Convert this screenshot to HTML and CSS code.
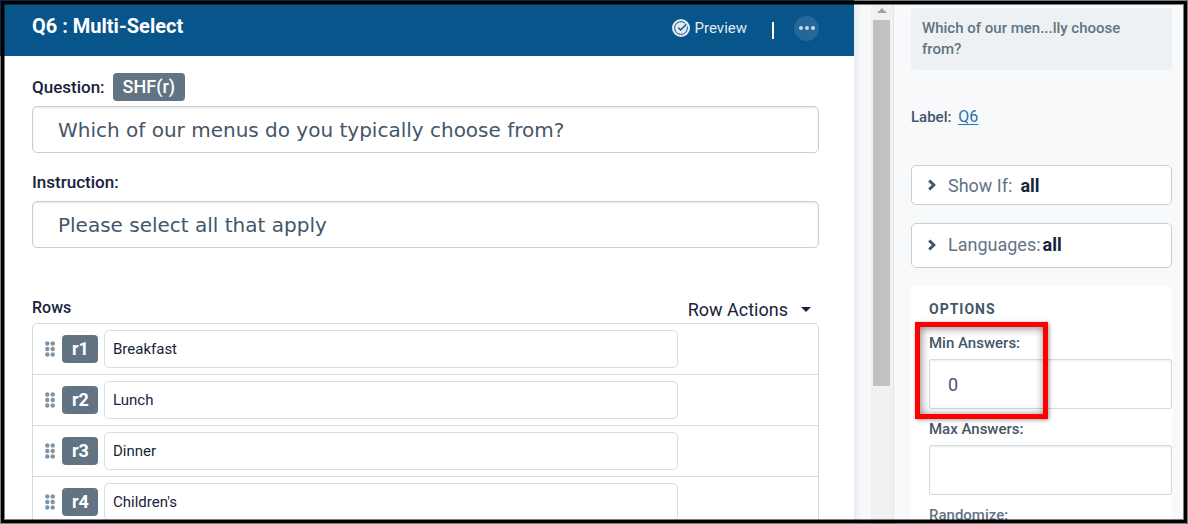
FILE: index.html
```html
<!DOCTYPE html>
<html lang="en">
<head>
<meta charset="utf-8">
<title>Q6 : Multi-Select</title>
<link rel="stylesheet" href="styles.css">
</head>
<body>
<div class="app">
  <main class="editor">
    <header class="topbar">
      <h1 class="topbar-title">Q6 : Multi-Select</h1>
      <button class="preview" type="button">
        <svg class="preview-icon" viewBox="0 0 18 18" aria-hidden="true">
          <circle cx="9" cy="9" r="9" fill="#e3e9f0"/>
          <path d="M13.2 4.2A6.4 6.4 0 1 0 15.2 7.4" fill="none" stroke="#08558c" stroke-width="1"/>
          <path d="M6.4 8.8l2.3 2.3 5.6-5.8" fill="none" stroke="#08558c" stroke-width="1.4"/>
        </svg>
        Preview
      </button>
      <span class="divider"></span>
      <button class="more" type="button" aria-label="More actions">
        <svg class="more-icon" viewBox="0 0 16 4" aria-hidden="true"><circle cx="2" cy="2" r="2"/><circle cx="8" cy="2" r="2"/><circle cx="14" cy="2" r="2"/></svg>
      </button>
    </header>
    <div class="form">
      <div class="field">
        <div class="field-head"><label for="question">Question:</label><span class="tag">SHF(r)</span></div>
        <input class="text-input" id="question" type="text" value="Which of our menus do you typically choose from?">
      </div>
      <div class="field">
        <div class="field-head"><label for="instruction">Instruction:</label></div>
        <input class="text-input" id="instruction" type="text" value="Please select all that apply">
      </div>
      <section class="rows">
        <div class="rows-head">
          <h2 class="rows-title">Rows</h2>
          <button class="row-actions" type="button">Row Actions <span class="caret"></span></button>
        </div>
        <ul class="row-list">
          <li class="row">
            <svg class="grip" viewBox="0 0 10 16" aria-hidden="true"><circle cx="2.3" cy="2.5" r="2.2"/><circle cx="7.7" cy="2.5" r="2.2"/><circle cx="2.3" cy="8" r="2.2"/><circle cx="7.7" cy="8" r="2.2"/><circle cx="2.3" cy="13.5" r="2.2"/><circle cx="7.7" cy="13.5" r="2.2"/></svg>
            <label class="tag row-tag" for="r1">r1</label><input class="row-input" id="r1" type="text" value="Breakfast">
          </li>
          <li class="row">
            <svg class="grip" viewBox="0 0 10 16" aria-hidden="true"><circle cx="2.3" cy="2.5" r="2.2"/><circle cx="7.7" cy="2.5" r="2.2"/><circle cx="2.3" cy="8" r="2.2"/><circle cx="7.7" cy="8" r="2.2"/><circle cx="2.3" cy="13.5" r="2.2"/><circle cx="7.7" cy="13.5" r="2.2"/></svg>
            <label class="tag row-tag" for="r2">r2</label><input class="row-input" id="r2" type="text" value="Lunch">
          </li>
          <li class="row">
            <svg class="grip" viewBox="0 0 10 16" aria-hidden="true"><circle cx="2.3" cy="2.5" r="2.2"/><circle cx="7.7" cy="2.5" r="2.2"/><circle cx="2.3" cy="8" r="2.2"/><circle cx="7.7" cy="8" r="2.2"/><circle cx="2.3" cy="13.5" r="2.2"/><circle cx="7.7" cy="13.5" r="2.2"/></svg>
            <label class="tag row-tag" for="r3">r3</label><input class="row-input" id="r3" type="text" value="Dinner">
          </li>
          <li class="row">
            <svg class="grip" viewBox="0 0 10 16" aria-hidden="true"><circle cx="2.3" cy="2.5" r="2.2"/><circle cx="7.7" cy="2.5" r="2.2"/><circle cx="2.3" cy="8" r="2.2"/><circle cx="7.7" cy="8" r="2.2"/><circle cx="2.3" cy="13.5" r="2.2"/><circle cx="7.7" cy="13.5" r="2.2"/></svg>
            <label class="tag row-tag" for="r4">r4</label><input class="row-input" id="r4" type="text" value="Children's">
          </li>
        </ul>
      </section>
    </div>
  </main>
  <div class="scrollbar" aria-hidden="true">
    <span class="scroll-arrow"></span>
    <span class="scroll-thumb"></span>
  </div>
  <aside class="sidebar">
    <p class="summary">Which of our men...lly choose from?</p>
    <p class="label-line">Label: <a class="label-link" href="#question">Q6</a></p>
    <button class="accordion" type="button">
      <svg class="chevron" viewBox="0 0 8 12" aria-hidden="true"><path d="M1.2 1.5L5.8 6l-4.6 4.5"/></svg>
      <span>Show If:</span><strong class="accordion-value">all</strong>
    </button>
    <button class="accordion languages" type="button">
      <svg class="chevron" viewBox="0 0 8 12" aria-hidden="true"><path d="M1.2 1.5L5.8 6l-4.6 4.5"/></svg>
      <span>Languages:</span><strong class="accordion-value">all</strong>
    </button>
    <section class="options">
      <h2 class="options-title">OPTIONS</h2>
      <div class="option">
        <label for="min">Min Answers:</label>
        <input class="option-input" id="min" type="text" value="0">
        <span class="highlight"></span>
      </div>
      <div class="option">
        <label for="max">Max Answers:</label>
        <input class="option-input" id="max" type="text">
      </div>
      <div class="option muted"><span>Randomize:</span></div>
    </section>
  </aside>
</div>
<div class="frame"></div>
</body>
</html>
```

FILE: styles.css
```css
* {
  box-sizing: border-box;
}

body {
  margin: 0;
  overflow: hidden;
  color: #17233d;
  background: #f8f9fb;
  font-family: Roboto, "Liberation Sans", sans-serif;
  font-size: 18px;
}

h1, h2, p, ul {
  margin: 0;
  padding: 0;
}

button, input {
  font: inherit;
  color: inherit;
}

button {
  padding: 0;
  border: 0;
  background: none;
}

.app {
  display: flex;
  height: 100vh;
  overflow: hidden;
}

.editor {
  flex: 1;
  min-width: 0;
  background: #fff;
  box-shadow: 0 0 10px #d5dde3;
}

.topbar {
  display: flex;
  align-items: center;
  height: 56px;
  padding: 0 35px 0 32px;
  background: #08558c;
  color: #fff;
}

.topbar-title {
  flex: 1;
  padding-bottom: 4px;
  font-size: 20px;
  line-height: 24px;
  font-weight: 700;
}

.preview {
  display: flex;
  align-items: center;
  gap: 5px;
  color: #e3e9f0;
  font-size: 15px;
}

.preview-icon {
  width: 18px;
  height: 18px;
}

.divider {
  width: 2px;
  height: 17px;
  margin: 5px 20px 0 25px;
  background: #fff;
}

.more {
  display: flex;
  align-items: center;
  justify-content: center;
  width: 25px;
  height: 25px;
  border-radius: 50%;
  background: #246799;
}

.more-icon {
  width: 16px;
  height: 4px;
  fill: #c8d9e5;
}

.form {
  padding: 16px 35px 0 32px;
}

.field {
  margin-bottom: 14px;
}

.field-head {
  display: flex;
  align-items: center;
  gap: 8px;
  height: 30px;
  margin-bottom: 4px;
  font-size: 17px;
  font-weight: 500;
}

.tag {
  padding: 0 10px;
  border-radius: 4px;
  background: #627484;
  color: #fff;
  font-size: 18px;
  font-weight: 500;
  line-height: 28px;
}

.text-input {
  display: block;
  width: 100%;
  height: 47px;
  padding: 0 25px;
  border: 1px solid #c8cfd3;
  border-radius: 5px;
  background: #fff;
  box-shadow: inset 0 1px 2px #e6e9eb;
  color: #435669;
  font-family: "DejaVu Sans", sans-serif;
  font-size: 20px;
}

.rows {
  margin-top: 48px;
}

.rows-head {
  display: flex;
  align-items: center;
  justify-content: space-between;
  height: 27px;
  padding-right: 8px;
}

.rows-title {
  padding-bottom: 4px;
  font-size: 16px;
  font-weight: 500;
}

.row-actions {
  display: flex;
  align-items: center;
  gap: 13px;
}

.caret {
  border: 5px solid transparent;
  border-top-color: #17233d;
  border-bottom: 0;
}

.row-list {
  list-style: none;
  border: 1px solid #d5dadd;
  border-radius: 5px;
}

.row {
  display: flex;
  align-items: center;
  height: 51px;
  padding: 0 140px 0 12px;
  border-bottom: 1px solid #d5dadd;
}

.grip {
  width: 10px;
  height: 16px;
  margin-right: 7px;
  fill: #8094a6;
}

.row-tag {
  width: 36px;
  margin-right: 6px;
  text-align: center;
  font-weight: 700;
}

.row-input {
  flex: 1;
  min-width: 0;
  height: 38px;
  padding: 0 8px;
  border: 1px solid #d9dee1;
  border-radius: 5px;
  background: #fff;
  font-size: 15px;
}

.scrollbar {
  display: flex;
  flex-direction: column;
  width: 23px;
  margin-left: 17px;
  padding: 8px 3px 0 2px;
  border-right: 1px solid #e2e4e6;
  background: #f1f1f1;
}

.scroll-arrow {
  align-self: center;
  border: 5px solid transparent;
  border-bottom-color: #a3a3a3;
  border-top: 0;
}

.scroll-thumb {
  height: 71%;
  margin-top: 7px;
  background: #c1c1c1;
}

.sidebar {
  display: flex;
  flex-direction: column;
  flex: 0 0 294px;
  padding: 8px 16px 0 17px;
  color: #435669;
  font-size: 15px;
}

.summary {
  padding: 10px 11px;
  border-radius: 3px;
  background: #eef1f4;
  color: #627484;
  font-weight: 500;
  line-height: 21px;
}

.label-line {
  margin: 35px 0 36px;
  font-weight: 500;
  line-height: 23px;
}

.label-link {
  margin-left: 3px;
  color: #2474b5;
  font-size: 16px;
  font-weight: 400;
  text-underline-offset: 2px;
}

.accordion {
  display: flex;
  flex-shrink: 0;
  align-items: center;
  height: 40px;
  margin-bottom: 18px;
  padding: 0 16px;
  border: 1px solid #c8cfd3;
  border-radius: 5px;
  background: #fff;
  color: #627484;
  font-size: 18px;
}

.languages {
  height: 45px;
  padding-bottom: 2px;
}

.chevron {
  width: 8px;
  height: 12px;
  margin-right: 12px;
  fill: none;
  stroke: #435669;
  stroke-width: 3;
}

.accordion-value {
  margin-left: 8px;
  color: #17233d;
}

.languages .accordion-value {
  margin-left: 2px;
}

.options {
  padding: 14px 0 0 18px;
  border-radius: 5px;
  background: #fff;
}

.options-title {
  margin-bottom: 13px;
  font-size: 14px;
  line-height: 18px;
  font-weight: 700;
  letter-spacing: 1px;
}

.option {
  position: relative;
  margin-bottom: 8px;
  font-weight: 500;
  line-height: 24px;
}

.option label {
  display: block;
  margin-bottom: 4px;
}

.muted {
  color: #627484;
}

.option-input {
  display: block;
  width: 100%;
  height: 50px;
  padding: 0 18px;
  border: 1px solid #d5dadd;
  border-radius: 2px;
  background: #fff;
  box-shadow: inset 0 1px 2px #e9ebed;
  font-size: 18px;
  font-weight: 400;
}

.highlight {
  position: absolute;
  top: -9px;
  left: -14px;
  width: 133px;
  height: 97px;
  border: 5px solid #f00;
  box-shadow: 1px 1px 4px rgba(0, 0, 0, 0.4), inset 1px 1px 8px rgba(0, 0, 0, 0.5);
  pointer-events: none;
}

.frame {
  position: fixed;
  inset: 0;
  border: 1px solid rgba(0, 0, 0, 0.5);
  box-shadow: inset 0 0 0 3px #000, inset 0 0 0 4px rgba(0, 0, 0, 0.5);
  pointer-events: none;
}
```
